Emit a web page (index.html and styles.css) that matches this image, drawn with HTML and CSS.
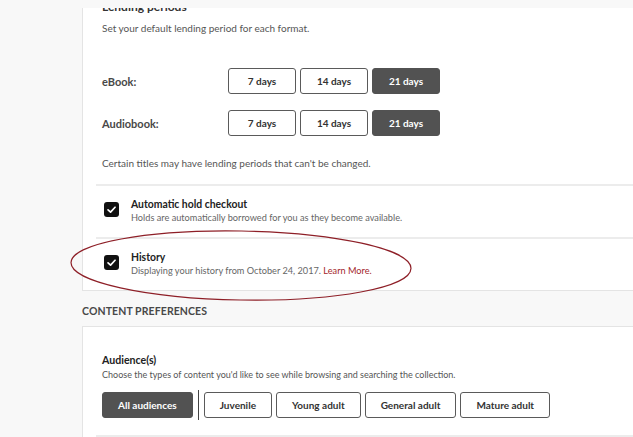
FILE: index.html
```html
<!DOCTYPE html>
<html lang="en">
<head>
<meta charset="utf-8">
<title>Settings</title>
<link rel="stylesheet" href="styles.css">
</head>
<body>
<div class="page">
  <section class="panel panel-lending">
    <div class="heading-clip"><h3 class="heading">Lending periods</h3></div>
    <p class="hint hint-top">Set your default lending period for each format.</p>
    <div class="format-row">
      <span class="format-label">eBook:</span>
      <div class="btn-group">
        <button class="btn">7 days</button>
        <button class="btn">14 days</button>
        <button class="btn btn-active">21 days</button>
      </div>
    </div>
    <div class="format-row format-row-second">
      <span class="format-label">Audiobook:</span>
      <div class="btn-group">
        <button class="btn">7 days</button>
        <button class="btn">14 days</button>
        <button class="btn btn-active">21 days</button>
      </div>
    </div>
    <p class="hint hint-note">Certain titles may have lending periods that can't be changed.</p>
    <div class="options">
      <div class="option">
        <span class="checkbox"><svg viewBox="0 0 16 16" width="16" height="16"><path d="M4.3 8.3 L7 10.8 L11.8 5.6" fill="none" stroke="#fff" stroke-width="1.8" stroke-linecap="round" stroke-linejoin="round"/></svg></span>
        <div class="option-text">
          <div class="option-title">Automatic hold checkout</div>
          <div class="option-desc">Holds are automatically borrowed for you as they become available.</div>
        </div>
      </div>
      <div class="option">
        <span class="checkbox"><svg viewBox="0 0 16 16" width="16" height="16"><path d="M4.3 8.3 L7 10.8 L11.8 5.6" fill="none" stroke="#fff" stroke-width="1.8" stroke-linecap="round" stroke-linejoin="round"/></svg></span>
        <div class="option-text">
          <div class="option-title">History</div>
          <div class="option-desc">Displaying your history from October 24, 2017. <a class="link" href="#">Learn More.</a></div>
        </div>
      </div>
    </div>
  </section>

  <h2 class="section-title">CONTENT PREFERENCES</h2>

  <section class="panel panel-content">
    <div class="audience">
      <div class="audience-title">Audience(s)</div>
      <div class="audience-desc">Choose the types of content you'd like to see while browsing and searching the collection.</div>
      <div class="audience-btns">
        <button class="btn btn-active btn-wide">All audiences</button>
        <span class="divider"></span>
        <button class="btn btn-wide">Juvenile</button>
        <button class="btn btn-wide">Young adult</button>
        <button class="btn btn-wide">General adult</button>
        <button class="btn btn-wide">Mature adult</button>
      </div>
    </div>
  </section>
</div>

<svg class="annotation" width="633" height="437" viewBox="0 0 633 437">
  <ellipse cx="241" cy="265.5" rx="170" ry="34.5" transform="rotate(1 241 265.5)" fill="none" stroke="#8e1f27" stroke-width="1.2"/>
</svg>
</body>
</html>
```

FILE: styles.css
```css
* { box-sizing: border-box; }

html, body {
  margin: 0;
  padding: 0;
}

body {
  background: #f8f8f8;
  font-family: Lato, "Open Sans", sans-serif;
  color: #555;
  width: 633px;
  height: 437px;
  overflow: hidden;
  position: relative;
}

.page {
  padding-left: 82px;
}

.panel {
  background: #fff;
  border-left: 1px solid #e4e4e4;
  border-bottom: 1px solid #e4e4e4;
  padding-left: 19px;
}

.heading-clip {
  height: 7px;
  margin-top: 8px;
  overflow: hidden;
  display: flex;
  align-items: flex-end;
}

.heading {
  margin: 0;
  font-size: 12px;
  line-height: 16px;
  font-weight: 700;
  color: #333;
}

.hint {
  margin: 0;
  font-size: 10px;
  line-height: 16px;
  color: #555;
}

.hint-top { margin-top: 5px; }

.format-row {
  display: flex;
  align-items: center;
  margin-top: 32px;
}

.format-row-second { margin-top: 16px; }

.format-label {
  width: 126px;
  font-size: 11px;
  font-weight: 700;
  color: #484848;
}

.btn-group {
  display: flex;
  gap: 4px;
}

.btn {
  height: 26px;
  width: 68px;
  border: 1px solid #5a5a5a;
  border-radius: 3px;
  background: #fff;
  font-family: inherit;
  font-size: 10px;
  font-weight: 700;
  color: #333;
  padding: 0;
  cursor: pointer;
}

.btn-active {
  background: #525252;
  border-color: #525252;
  color: #fff;
}

.hint-note { margin-top: 19px; }

.options {
  margin-top: 13px;
  margin-left: -6px;
}

.option {
  display: flex;
  align-items: flex-start;
  border-top: 2px solid #ececec;
  padding: 11px 0 12px 8px;
}

.checkbox {
  width: 15px;
  height: 15px;
  border-radius: 3px;
  background: #111;
  margin-top: 5px;
  margin-right: 12px;
  display: flex;
  align-items: center;
  justify-content: center;
  flex-shrink: 0;
}

.checkbox svg { width: 15px; height: 15px; }

.option-title {
  font-size: 10.4px;
  line-height: 14px;
  font-weight: 700;
  color: #222;
}

.option-desc {
  font-size: 9.2px;
  line-height: 14px;
  color: #666;
}

.link {
  color: #a4262c;
  text-decoration: none;
}

.section-title {
  margin: 0;
  padding: 12px 0 7px;
  font-size: 10.5px;
  line-height: 16px;
  font-weight: 700;
  color: #484848;
  letter-spacing: 0.1px;
}

.panel-content {
  border-top: 1px solid #e4e4e4;
  border-bottom: none;
  height: 120px;
}

.audience {
  margin-left: -6px;
  padding: 25px 0 15px 6px;
  border-bottom: 2px solid #ececec;
}

.audience-title {
  font-size: 10.6px;
  line-height: 16px;
  font-weight: 700;
  color: #222;
}

.audience-desc {
  font-size: 9px;
  line-height: 14px;
  color: #555;
}

.audience-btns {
  display: flex;
  align-items: center;
  gap: 4px;
  margin-top: 8px;
}

.btn-wide {
  width: auto;
  min-width: 68px;
  padding: 0 15px;
}

.divider {
  width: 1px;
  height: 30px;
  background: #444;
  margin: 0 1px;
}

.annotation {
  position: absolute;
  left: 0;
  top: 0;
  pointer-events: none;
}
```
